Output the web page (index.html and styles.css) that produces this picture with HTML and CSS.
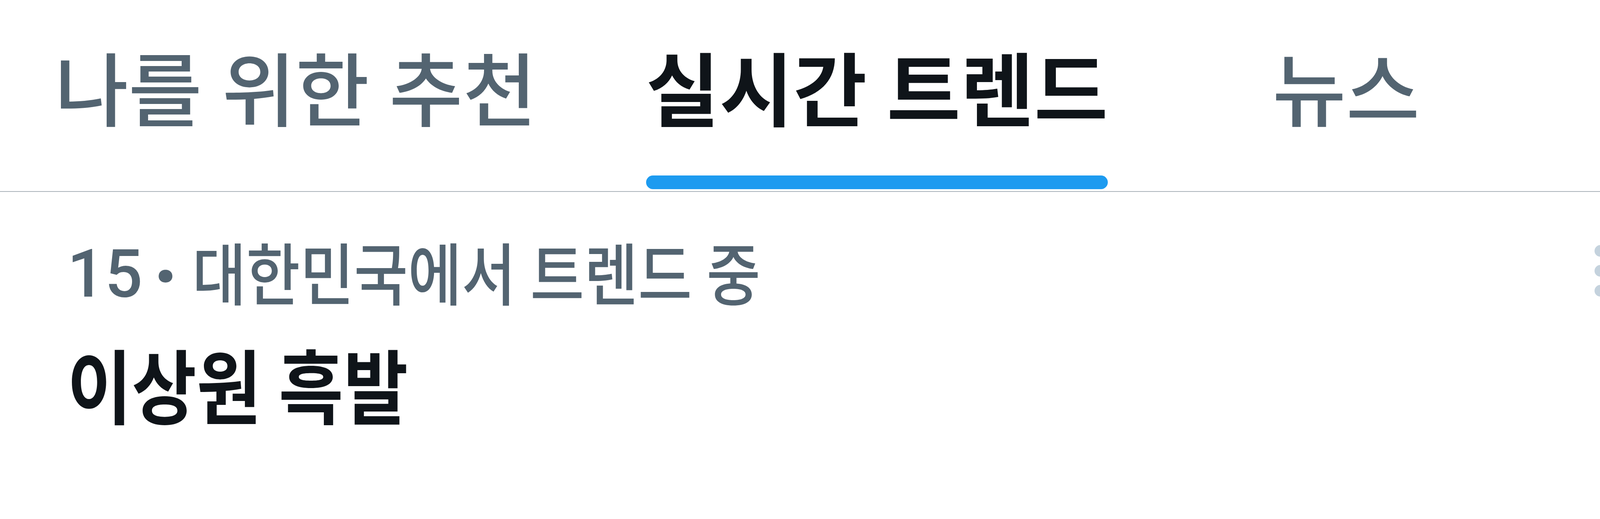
FILE: index.html
```html
<!DOCTYPE html>
<html lang="ko">
<head>
<meta charset="utf-8">
<title>실시간 트렌드</title>
<link rel="stylesheet" href="styles.css">
</head>
<body>
  <nav class="tabs">
    <a class="tab"><span class="tab-inner"><span class="tab-label">나를 위한 추천</span><span class="indicator"></span></span></a>
    <a class="tab active"><span class="tab-inner"><span class="tab-label">실시간 트렌드</span><span class="indicator"></span></span></a>
    <a class="tab"><span class="tab-inner"><span class="tab-label">뉴스</span><span class="indicator"></span></span></a>
    <a class="tab"><span class="tab-inner"><span class="tab-label">스포츠</span><span class="indicator"></span></span></a>
  </nav>
  <section class="trend">
    <div class="trend-main">
      <div class="meta"><span class="rank">15</span> <span class="dot">·</span> <span class="ko">대한민국에서 트렌드 중</span></div>
      <div class="name"><span class="name-text">이상원 흑발</span></div>
    </div>
    <svg class="more" viewBox="0 0 30 132" width="30" height="132" aria-label="더 보기">
      <circle cx="15" cy="15" r="15"/>
      <circle cx="15" cy="66" r="15"/>
      <circle cx="15" cy="117" r="15"/>
    </svg>
  </section>
</body>
</html>
```
FILE: styles.css
```css
html, body {
  margin: 0;
  padding: 0;
  background: #ffffff;
}

body {
  width: 4320px;
  height: 1328px;
  overflow: hidden;
  font-family: Roboto, "Noto Sans CJK KR", sans-serif;
}

.tabs {
  display: flex;
  height: 489px;
  border-bottom: 2px solid #aab2b9;
  overflow: hidden;
}

.tab {
  flex: 0 0 auto;
  display: flex;
  justify-content: center;
  box-sizing: border-box;
  min-width: 940px;
  padding: 0 140px;
  color: #536471;
  font-size: 205px;
  font-weight: 500;
  text-decoration: none;
}

.tab.active {
  color: #0f1419;
  font-weight: 700;
}

.tab-inner {
  display: flex;
  flex-direction: column;
}

.tab-label {
  flex: 1;
  display: flex;
  align-items: center;
  padding-top: 25px;
  line-height: 1;
  white-space: nowrap;
}

.indicator {
  height: 35px;
  margin-bottom: 5px;
  border-radius: 18px;
  background: transparent;
}

.tab.active .indicator {
  background: #1d9bf0;
}

.trend {
  display: flex;
  align-items: flex-start;
  padding: 117px 208px 0 172px;
}

.trend-main {
  flex: 1;
}

.meta {
  height: 200px;
  font-size: 150px;
  font-weight: 500;
  line-height: 200px;
  color: #536471;
  white-space: nowrap;
}

.rank {
  font-size: 170px;
  font-weight: 500;
  line-height: 0;
}

.dot {
  display: inline-block;
  margin-right: 10px;
  transform: scale(1.7);
}

.ko {
  display: inline-block;
  transform: scaleY(1.15);
}

.name {
  margin-top: 71px;
  font-size: 180px;
  font-weight: 700;
  line-height: 240px;
  color: #0f1419;
  white-space: nowrap;
}

.name-text {
  display: inline-block;
  transform: scaleY(1.15);
}

.more {
  flex: 0 0 auto;
  margin-top: 19px;
  fill: #c4d2dd;
}
```
